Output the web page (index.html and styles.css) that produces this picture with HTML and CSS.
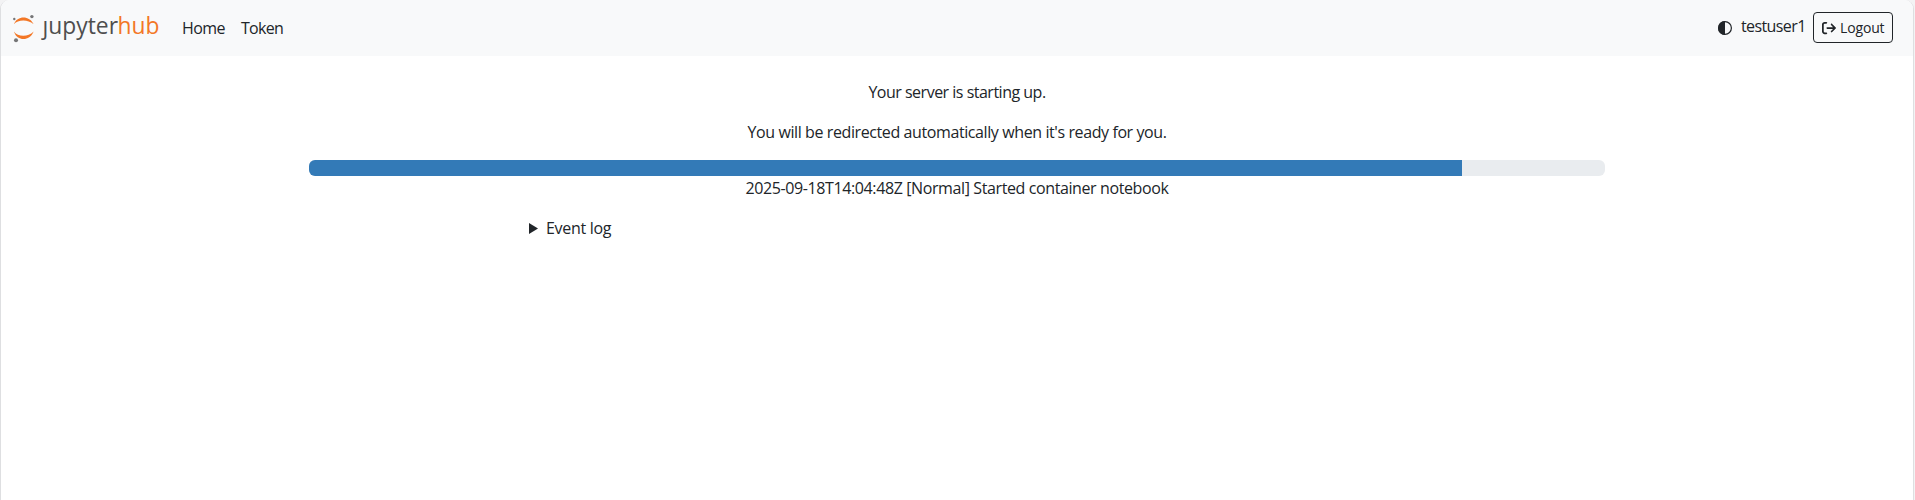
FILE: index.html
```html
<!DOCTYPE html>
<html lang="en">
<head>
<meta charset="utf-8">
<title>JupyterHub</title>
<link rel="stylesheet" href="styles.css">
</head>
<body>
<div class="window">
  <nav class="navbar">
    <svg class="logo" width="148" height="28" viewBox="0 0 148 28">
      <g fill="#f37726">
        <path d="M1.900 10.300C3.600 5.600 7.500 3.500 11.500 3.500S19.400 5.600 21.700 10.300C18.500 7.500 15.200 6.400 11.300 6.400S4.100 7.500 1.900 10.300Z"/>
        <path d="M1.900 17.500C3.600 22.800 7.500 25 11.500 25S19.400 22.800 21.700 17.500C18.500 20.500 15.200 21.800 11.300 21.800S4.100 20.500 1.900 17.500Z"/>
      </g>
      <g fill="#767677">
        <circle cx="2.300" cy="5" r="1.200"/>
        <circle cx="19.900" cy="2.600" r="1.700"/>
        <circle cx="4" cy="26.300" r="2"/>
      </g>
      <text class="logo-text" x="30.500" y="20" textLength="75.500" lengthAdjust="spacingAndGlyphs" fill="#4e4e4e">ȷupyter</text>
      <text class="logo-text" x="105.500" y="20" textLength="42" lengthAdjust="spacingAndGlyphs" fill="#f37726">hub</text>
    </svg>
    <a class="link home">Home</a>
    <a class="link token">Token</a>
    <div class="account">
      <svg class="theme" width="16" height="16" viewBox="0 0 16 16"><circle cx="8" cy="8" r="6.400" fill="none" stroke="#212529" stroke-width="1.200"/><path d="M8 1A7 7 0 0 0 8 15Z" fill="#212529"/></svg>
      <span class="user">testuser1</span>
      <a class="logout">
        <svg width="14" height="14" viewBox="0 0 512 512"><path fill="#212529" d="M502.600 278.600c12.500-12.500 12.500-32.800 0-45.300l-128-128c-12.500-12.500-32.800-12.500-45.300 0s-12.500 32.800 0 45.300L402.700 224 192 224c-17.700 0-32 14.300-32 32s14.300 32 32 32l210.700 0-73.400 73.400c-12.500 12.500-12.500 32.800 0 45.300s32.800 12.500 45.300 0l128-128zM160 96c17.700 0 32-14.300 32-32s-14.300-32-32-32L96 32C43 32 0 75 0 128L0 384c0 53 43 96 96 96l64 0c17.700 0 32-14.300 32-32s-14.300-32-32-32l-64 0c-17.700 0-32-14.300-32-32l0-256c0-17.700 14.300-32 32-32l64 0z"/></svg>
        <span>Logout</span>
      </a>
    </div>
  </nav>
  <main class="container">
    <p class="message"><span class="starting">Your server is starting up.</span></p>
    <p class="message"><span class="redirect">You will be redirected automatically when it's ready for you.</span></p>
    <div class="progress"><div class="bar" style="width: 89%"></div></div>
    <p class="message"><span class="event">2025-09-18T14:04:48Z [Normal] Started container notebook</span></p>
    <div class="log"><svg width="9" height="11" viewBox="0 0 8 10" preserveAspectRatio="none"><path d="M0 0L8 5L0 10Z" fill="#212529"/></svg><span class="log-label">Event log</span></div>
  </main>
</div>
</body>
</html>
```
FILE: styles.css
```css
* { box-sizing: border-box; }
body {
  margin: 0;
  background: #f3f3f4;
  color: #212529;
  font: 16px/24px "Open Sans", "Noto Sans", sans-serif;
  overflow: hidden;
}
.window {
  width: 1914px;
  height: 500px;
  border: 1px solid #dedfe1;
  border-width: 0 1px;
  border-radius: 9px 9px 0 0;
  background: #fff;
  overflow: hidden;
}
.navbar {
  display: flex;
  align-items: center;
  height: 56px;
  padding: 0 20px 1px 11px;
  background: #f8f9fa;
}
.logo { display: block; overflow: visible; margin-top: 1px; }
.logo-text { font: 23.5px "Open Sans", "Noto Sans", sans-serif; }
.link { white-space: nowrap; }
.home { margin-left: 22px; width: 59px; letter-spacing: -0.6px; }
.token { letter-spacing: -0.7px; }
.account { display: flex; align-items: center; margin-left: auto; }
.theme { margin-right: 8px; }
.user { width: 72px; margin-top: -4px; white-space: nowrap; letter-spacing: -0.6px; }
.logout {
  display: flex;
  align-items: center;
  width: 80px;
  height: 31px;
  padding-left: 8px;
  gap: 4px;
  border: 1px solid #212529;
  border-radius: 4px;
  font-size: 14px;
  letter-spacing: -0.15px;
}
.container { width: 1296px; margin: 24px auto 0; }
.message { margin: 0 0 16px; text-align: center; white-space: nowrap; }
.starting { letter-spacing: -0.5px; }
.redirect { letter-spacing: -0.4px; }
.event { letter-spacing: -0.39px; }
.log-label { letter-spacing: -0.3px; }
.progress {
  height: 16px;
  border-radius: 6px;
  background: #e9ecef;
  overflow: hidden;
}
.bar { height: 100%; background: #337ab7; }
.log { display: flex; align-items: center; gap: 8px; padding-left: 220px; }
```
